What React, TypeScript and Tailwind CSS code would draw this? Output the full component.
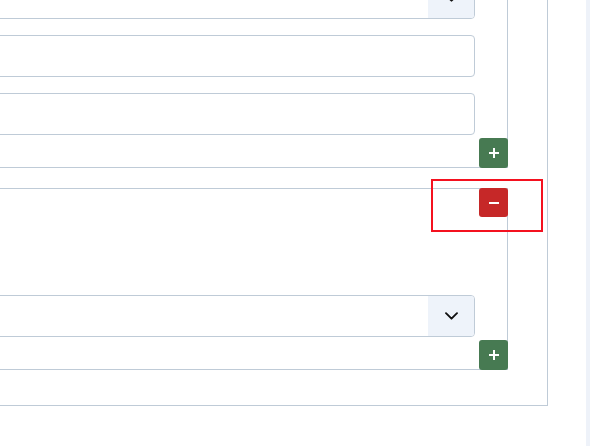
import React from 'react';

const Chevron = () => (
  <svg width="13" height="8" viewBox="0 0 13 8" fill="none">
    <path d="M1 1.2l5.5 5.5 5.5-5.5" stroke="#111" strokeWidth="1.9" strokeLinecap="round" strokeLinejoin="round" />
  </svg>
);

const PlusIcon = () => (
  <svg width="12" height="12" viewBox="0 0 12 12">
    <path d="M6 1v10M1 6h10" stroke="#fff" strokeWidth="2" />
  </svg>
);

const MinusIcon = () => (
  <svg width="12" height="12" viewBox="0 0 12 12">
    <path d="M1 6h10" stroke="#fff" strokeWidth="2" />
  </svg>
);

const SelectField = () => (
  <div className="flex h-[42px] rounded-[4px] border border-[#bfcbd7] overflow-hidden bg-white">
    <div className="flex-1" />
    <div className="w-[46px] bg-[#eef3fa] flex items-center justify-center">
      <Chevron />
    </div>
  </div>
);

const InputField = () => (
  <div className="h-[42px] rounded-[4px] border border-[#bfcbd7] bg-white" />
);

const AddButton = () => (
  <button className="absolute right-[-1px] bottom-[-1px] w-[29px] h-[30px] rounded-[3px] bg-[#477a52] flex items-center justify-center">
    <PlusIcon />
  </button>
);

const App = () => {
  return (
    <div className="relative flex w-[590px] h-[446px] overflow-hidden bg-white" style={{ fontFamily: '"Liberation Sans", sans-serif' }}>
      <div className="w-[586px] shrink-0 overflow-hidden">
        {/* Outer group, cut off on the left and top */}
        <div className="mt-[-97px] ml-[-400px] w-[948px] border border-[#bfcbd7] pt-[40px] pr-[39px] pb-[35px] pl-[40px]">
          {/* First item */}
          <div className="relative border border-[#bfcbd7] p-8 flex flex-col gap-4">
            <SelectField />
            <InputField />
            <InputField />
            <AddButton />
          </div>

          {/* Second item */}
          <div className="relative mt-5 border border-[#bfcbd7] p-8 flex flex-col">
            <button className="absolute right-[-1px] top-[-1px] w-[29px] h-[29px] rounded-[3px] bg-[#c62828] flex items-center justify-center">
              <MinusIcon />
            </button>
            <div className="h-[74px]" />
            <SelectField />
            <AddButton />
          </div>
        </div>
      </div>
      <div className="flex-1 bg-[#eef2f9]" />

      {/* highlight annotation */}
      <div className="absolute left-[431px] top-[179px] w-[112px] h-[53px] border-2 border-[#f4111f] pointer-events-none" />
    </div>
  );
};

export default App;
